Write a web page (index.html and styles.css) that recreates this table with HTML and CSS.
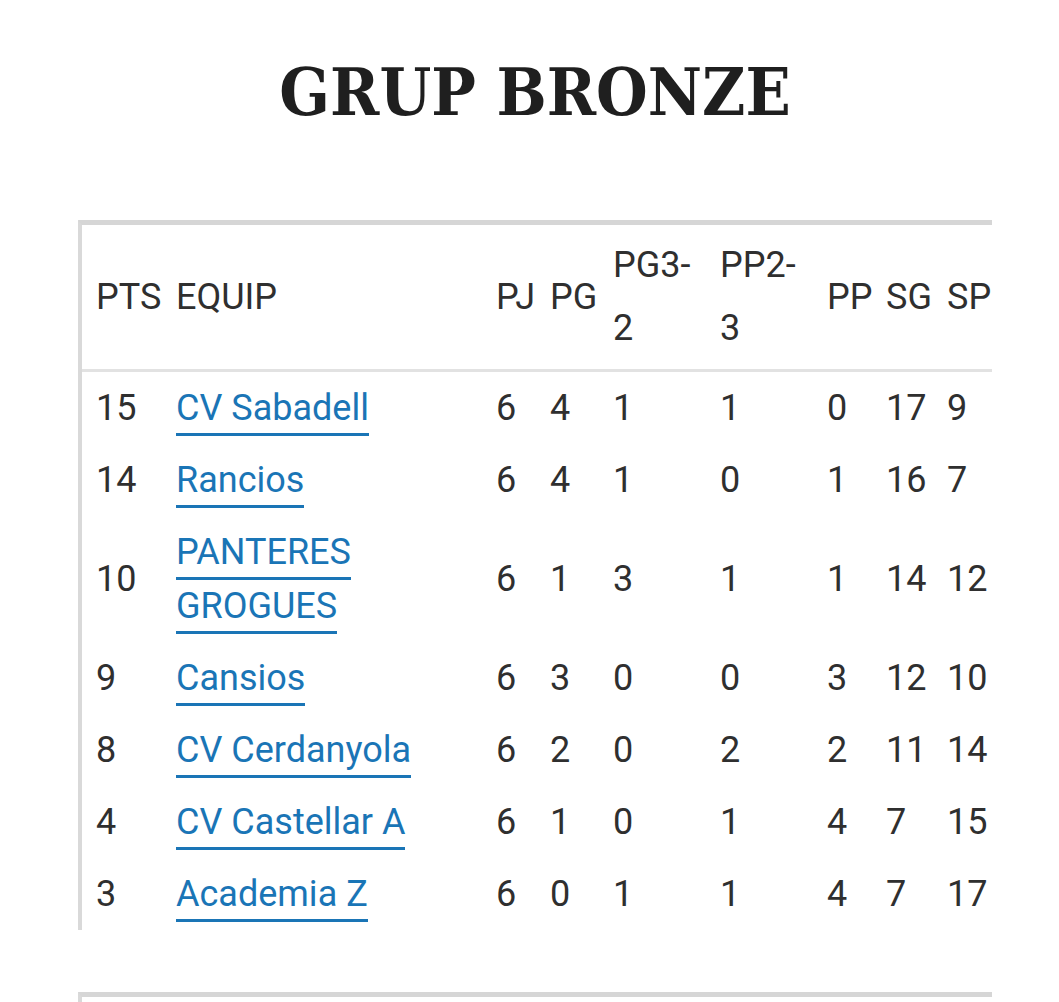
FILE: index.html
```html
<!DOCTYPE html>
<html lang="ca">
<head>
<meta charset="utf-8">
<title>Grup Bronze</title>
<link rel="stylesheet" href="styles.css">
</head>
<body>
<main class="page">
  <h2 class="group-title">GRUP BRONZE</h2>
  <div class="table-wrap">
    <table class="standings">
      <colgroup>
        <col class="c-pts"><col class="c-team"><col class="c-pj"><col class="c-pg"><col class="c-pg3"><col class="c-pp2"><col class="c-pp"><col class="c-sg"><col class="c-sp">
      </colgroup>
      <thead>
        <tr><th>PTS</th><th>EQUIP</th><th>PJ</th><th>PG</th><th>PG3-<br>2</th><th>PP2-<br>3</th><th>PP</th><th>SG</th><th>SP</th></tr>
      </thead>
      <tbody>
        <tr><td>15</td><td><a href="#">CV Sabadell</a></td><td>6</td><td>4</td><td>1</td><td>1</td><td>0</td><td>17</td><td>9</td></tr>
        <tr><td>14</td><td><a href="#">Rancios</a></td><td>6</td><td>4</td><td>1</td><td>0</td><td>1</td><td>16</td><td>7</td></tr>
        <tr><td>10</td><td><a href="#">PANTERES GROGUES</a></td><td>6</td><td>1</td><td>3</td><td>1</td><td>1</td><td>14</td><td>12</td></tr>
        <tr><td>9</td><td><a href="#">Cansios</a></td><td>6</td><td>3</td><td>0</td><td>0</td><td>3</td><td>12</td><td>10</td></tr>
        <tr><td>8</td><td><a href="#">CV Cerdanyola</a></td><td>6</td><td>2</td><td>0</td><td>2</td><td>2</td><td>11</td><td>14</td></tr>
        <tr><td>4</td><td><a href="#">CV Castellar A</a></td><td>6</td><td>1</td><td>0</td><td>1</td><td>4</td><td>7</td><td>15</td></tr>
        <tr><td>3</td><td><a href="#">Academia Z</a></td><td>6</td><td>0</td><td>1</td><td>1</td><td>4</td><td>7</td><td>17</td></tr>
      </tbody>
    </table>
  </div>
  <div class="table-wrap next"></div>
</main>
</body>
</html>
```
FILE: styles.css
```css
html, body {
  margin: 0;
  padding: 0;
  background: #ffffff;
}
body {
  font-family: Roboto, "Liberation Sans", sans-serif;
  color: #2f2f2f;
}
.page {
  margin: 0 67px 0 78px;
  padding-top: 44px;
}
.group-title {
  font-family: "DejaVu Serif", serif;
  font-stretch: condensed;
  font-weight: bold;
  font-size: 66px;
  line-height: 96px;
  margin: 0 0 80px 0;
  text-align: center;
  color: #1f1f1f;
}
.table-wrap {
  overflow: hidden;
  border-top: 5px solid #d6d6d6;
  border-left: 4px solid #d9d9d9;
}
.table-wrap.next {
  margin-top: 62px;
  height: 20px;
}
.standings {
  border-collapse: collapse;
  table-layout: fixed;
  width: 1000px;
  font-size: 36px;
}
.c-pts { width: 94px; }
.c-team { width: 320px; }
.c-pj { width: 54px; }
.c-pg { width: 63px; }
.c-pg3 { width: 107px; }
.c-pp2 { width: 107px; }
.c-pp { width: 59px; }
.c-sg { width: 61px; }
.c-sp { width: 135px; }
.standings th,
.standings td {
  padding: 9px 0;
  text-align: left;
  vertical-align: middle;
  white-space: nowrap;
}
.standings th {
  font-weight: normal;
  line-height: 63px;
}
.standings td {
  line-height: 54px;
}
.standings th:first-child,
.standings td:first-child {
  padding-left: 14px;
}
.standings td:nth-child(2) {
  white-space: normal;
  padding-right: 60px;
}
.standings thead tr {
  border-bottom: 3px solid #e2e2e2;
}
.standings a {
  color: #1a75b6;
  text-decoration: none;
  border-bottom: 3px solid #1a75b6;
  padding-bottom: 4px;
}
```
